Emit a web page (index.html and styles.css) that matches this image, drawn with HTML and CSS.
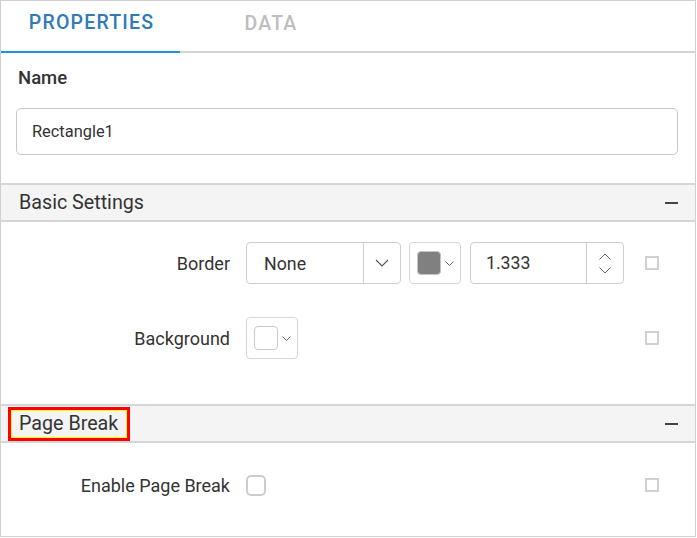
FILE: index.html
```html
<!DOCTYPE html>
<html>
<head>
<meta charset="utf-8">
<link rel="stylesheet" href="styles.css">
</head>
<body>
<div class="panel">
  <div class="tabs">
    <div class="tab active">PROPERTIES</div>
    <div class="tab">DATA</div>
  </div>
  <div class="name-section">
    <div class="name-label">Name</div>
    <div class="text-input">Rectangle1</div>
  </div>
  <div class="section-header">
    <span class="section-title">Basic Settings</span>
    <span class="minus"></span>
  </div>
  <div class="section-body basic">
    <div class="prop-row">
      <div class="prop-label">Border</div>
      <div class="prop-controls">
        <div class="dropdown">
          <span class="dd-text">None</span>
          <span class="dd-btn">
            <svg width="14" height="8" viewBox="0 0 14 8"><path d="M1 1 L7 7 L13 1" fill="none" stroke="#555" stroke-width="1.1"/></svg>
          </span>
        </div>
        <div class="color-pick">
          <span class="swatch grey"></span>
          <svg class="small-chev" width="9" height="5" viewBox="0 0 9 5"><path d="M0.5 0.5 L4.5 4.5 L8.5 0.5" fill="none" stroke="#666" stroke-width="1"/></svg>
        </div>
        <div class="numeric">
          <span class="num-text">1.333</span>
          <span class="spin">
            <svg width="12" height="7" viewBox="0 0 12 7"><path d="M0.5 6.5 L6 1 L11.5 6.5" fill="none" stroke="#666" stroke-width="1"/></svg>
            <svg width="12" height="7" viewBox="0 0 12 7"><path d="M0.5 0.5 L6 6 L11.5 0.5" fill="none" stroke="#666" stroke-width="1"/></svg>
          </span>
        </div>
      </div>
      <span class="sq"></span>
    </div>
    <div class="prop-row">
      <div class="prop-label">Background</div>
      <div class="prop-controls">
        <div class="color-pick">
          <span class="swatch white"></span>
          <svg class="small-chev" width="9" height="5" viewBox="0 0 9 5"><path d="M0.5 0.5 L4.5 4.5 L8.5 0.5" fill="none" stroke="#666" stroke-width="1"/></svg>
        </div>
      </div>
      <span class="sq"></span>
    </div>
  </div>
  <div class="section-header">
    <span class="section-title highlight">Page Break</span>
    <span class="minus"></span>
  </div>
  <div class="section-body pagebreak">
    <div class="prop-row short">
      <div class="prop-label">Enable Page Break</div>
      <div class="prop-controls">
        <span class="checkbox"></span>
      </div>
      <span class="sq"></span>
    </div>
  </div>
</div>
</body>
</html>
```

FILE: styles.css
```css
* { box-sizing: border-box; }
html, body {
  margin: 0;
  padding: 0;
  background: #fff;
  font-family: Roboto, "Liberation Sans", sans-serif;
  color: #333;
}
.panel {
  width: 696px;
  height: 537px;
  border: 1px solid #cfcfcf;
  overflow: hidden;
}
.tabs {
  display: flex;
  height: 52px;
  border-bottom: 2px solid #d4d4d4;
}
.tab {
  width: 179px;
  height: 52px;
  margin-bottom: -2px;
  display: flex;
  align-items: center;
  justify-content: center;
  padding-bottom: 8px;
  font-size: 19.5px;
  font-weight: 500;
  letter-spacing: 1.2px;
  color: #bdbdbd;
}
.tab.active {
  color: #317ab9;
  border-bottom: 2px solid #1e97d8;
  padding-left: 2px;
}
.tab + .tab { width: 182px; }
.name-section {
  padding: 14px 17px 28px 15px;
}
.name-label {
  font-size: 18.5px;
  font-weight: 500;
  line-height: 22px;
  padding-left: 2px;
  color: #333;
}
.text-input {
  margin-top: 19px;
  height: 47px;
  width: 662px;
  border: 1px solid #c8c8c8;
  border-radius: 5px;
  display: flex;
  align-items: center;
  padding-left: 15px;
  font-size: 16.4px;
  color: #333;
}
.section-header {
  height: 39px;
  background: #f4f4f4;
  border-top: 2px solid #d6d6d6;
  border-bottom: 2px solid #d6d6d6;
  display: flex;
  align-items: center;
  justify-content: space-between;
  padding: 0 17px 0 18px;
}
.section-title {
  font-size: 19.7px;
  font-weight: 400;
  color: #333;
  line-height: 24px;
}
.section-title.highlight {
  margin-left: -11px;
  padding: 2px 9px 2px 8px;
  border: 3px solid #ff0000;
  outline: 1px solid #ffff00;
  outline-offset: -4px;
}
.minus {
  width: 13px;
  height: 2px;
  background: #444;
}
.section-body.basic {
  padding-top: 20px;
  height: 182px;
  display: flex;
  flex-direction: column;
  gap: 33px;
}
.section-body.pagebreak {
  padding-top: 29px;
}
.prop-row {
  display: flex;
  align-items: center;
  height: 42px;
}
.prop-row.short { height: 26px; }
.prop-label {
  width: 229px;
  text-align: right;
  font-size: 18px;
  color: #333;
}
.prop-controls {
  margin-left: 16px;
  width: 399px;
  display: flex;
  align-items: center;
}
.dropdown {
  width: 155px;
  height: 42px;
  border: 1px solid #cfcfcf;
  border-radius: 4px;
  display: flex;
}
.dd-text {
  flex: 1;
  display: flex;
  align-items: center;
  padding-left: 17px;
  font-size: 17.8px;
  color: #333;
}
.dd-btn {
  width: 37px;
  border-left: 1px solid #cfcfcf;
  display: flex;
  align-items: center;
  justify-content: center;
}
.color-pick {
  width: 52px;
  height: 42px;
  border: 1px solid #d6d6d6;
  border-radius: 4px;
  display: flex;
  align-items: center;
  padding-left: 7px;
  gap: 4px;
}
.dropdown + .color-pick { margin-left: 8px; }
.color-pick + .numeric { margin-left: 9px; }
.swatch {
  width: 24px;
  height: 24px;
  border-radius: 4px;
}
.swatch.grey {
  background: #808080;
  border: 1px solid #c4c4c4;
}
.swatch.white {
  background: #fff;
  border: 1px solid #cacaca;
}
.numeric {
  width: 154px;
  height: 42px;
  border: 1px solid #cfcfcf;
  border-radius: 4px;
  display: flex;
}
.num-text {
  flex: 1;
  display: flex;
  align-items: center;
  padding-left: 15px;
  font-size: 17.7px;
  color: #333;
}
.spin {
  width: 37px;
  border-left: 1px solid #cfcfcf;
  display: flex;
  flex-direction: column;
  align-items: center;
  justify-content: center;
  gap: 7px;
}
.sq {
  width: 14px;
  height: 14px;
  border: 2px solid #d0d0d0;
}
.checkbox {
  width: 20px;
  height: 21px;
  border: 2px solid #cdcdcd;
  border-radius: 5px;
}
```
